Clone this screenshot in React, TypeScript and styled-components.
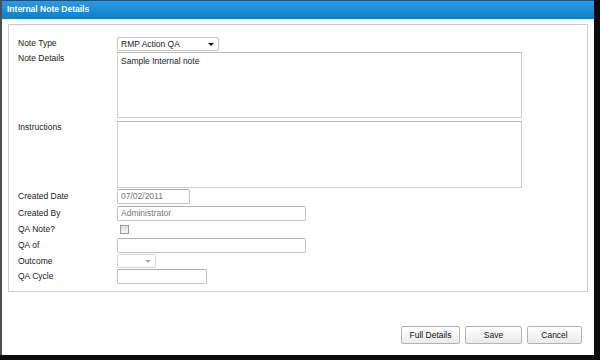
import styled, { createGlobalStyle } from "styled-components";

const Global = createGlobalStyle`
    html, body {
        margin: 0;
        padding: 0;
        background: #0c0c0c;
    }
    body {
        width: 600px;
        height: 360px;
        overflow: hidden;
        font-family: "Liberation Sans", Arial, sans-serif;
    }
`;

const Window = styled.div`
    width: 592px;
    height: 355px;
    background: #fff;
    border-left: 2px solid #4a4f55;
    display: flex;
    flex-direction: column;
    font-family: "Liberation Sans", Arial, sans-serif;
    font-size: 8.5px;
    color: #222;
`;

const TitleBar = styled.div`
    height: 18px;
    flex: none;
    background: linear-gradient(#2f9ae0, #0d7fcf);
    border-top: 1px solid #1c4f7a;
    color: #fff;
    font-weight: bold;
    font-size: 8.5px;
    line-height: 17px;
    padding-left: 5px;
`;

const Fieldset = styled.div`
    margin: 5px 6px 0 6px;
    height: 254px;
    border: 1px solid #cfcfcf;
    border-top-color: #e2c2c2;
    padding: 12px 9px 0 9px;
    display: flex;
    flex-direction: column;
`;

const Row = styled.div<{ $mt?: number; $h: number }>`
    display: grid;
    grid-template-columns: 99px 1fr;
    align-items: start;
    justify-items: start;
    margin-top: ${p => p.$mt ?? 0}px;
    height: ${p => p.$h}px;
`;

const Label = styled.div<{ $top?: number }>`
    line-height: 13px;
    padding-top: ${p => p.$top ?? 0}px;
    color: #222;
`;

const TextInput = styled.div<{ $w: number; $disabled?: boolean }>`
    width: ${p => p.$w}px;
    height: 13px;
    border: 1px solid #c4c4c4;
    border-top-color: #b0b0b0;
    border-radius: 2px;
    background: #fff;
    line-height: 13px;
    padding-left: 3px;
    box-sizing: content-box;
    color: ${p => (p.$disabled ? "#777" : "#222")};
`;

const TextArea = styled.div<{ $h: number }>`
    width: 397px;
    height: ${p => p.$h}px;
    border: 1px solid #d0d0d0;
    border-top-color: #bdbdbd;
    padding: 3px 3px;
    line-height: 11px;
`;

const Select = styled.div<{ $w: number; $light?: boolean }>`
    width: ${p => p.$w}px;
    height: 12px;
    border: 1px solid ${p => (p.$light ? "#c4c4c4" : "#d8d8d8")};
    border-radius: 2px;
    background: #fff;
    display: flex;
    align-items: center;
    justify-content: space-between;
    padding: 0 4px 0 3px;
    line-height: 12px;
`;

const Arrow = styled.span<{ $light?: boolean }>`
    width: 0;
    height: 0;
    border-left: 3px solid transparent;
    border-right: 3px solid transparent;
    border-top: 3px solid ${p => (p.$light ? "#aaa" : "#111")};
`;

const Check = styled.div`
    width: 7px;
    height: 7px;
    margin: 3px 0 0 3px;
    border: 1px solid #9a9a9a;
    background: linear-gradient(#ddd, #f6f6f6);
`;

const Footer = styled.div`
    display: flex;
    justify-content: flex-end;
    gap: 5px;
    margin-top: 34px;
    padding-right: 12px;
`;

const Button = styled.button<{ $w: number }>`
    width: ${p => p.$w}px;
    height: 18px;
    padding: 0;
    border: 1px solid #b4b4b4;
    border-radius: 2px;
    background: linear-gradient(#ffffff, #ebebeb);
    font-family: "Liberation Sans", Arial, sans-serif;
    font-size: 8.5px;
    color: #111;
`;

export default function App() {
    return (
        <>
            <Global />
            <Window>
                <TitleBar>Internal Note Details</TitleBar>
                <Fieldset>
                    <Row $h={14}>
                        <Label>Note Type</Label>
                        <Select $w={93} $light>
                            <span>RMP Action QA</span>
                            <Arrow />
                        </Select>
                    </Row>
                    <Row $mt={1} $h={65}>
                        <Label>Note Details</Label>
                        <TextArea $h={58}>Sample Internal note</TextArea>
                    </Row>
                    <Row $mt={4} $h={66}>
                        <Label>Instructions</Label>
                        <TextArea $h={59} />
                    </Row>
                    <Row $mt={2} $h={15}>
                        <Label $top={1}>Created Date</Label>
                        <TextInput $w={68} $disabled>07/02/2011</TextInput>
                    </Row>
                    <Row $mt={2} $h={15}>
                        <Label $top={1}>Created By</Label>
                        <TextInput $w={184} $disabled>Administrator</TextInput>
                    </Row>
                    <Row $mt={1} $h={15}>
                        <Label $top={1}>QA Note?</Label>
                        <Check />
                    </Row>
                    <Row $mt={1} $h={15}>
                        <Label $top={1}>QA of</Label>
                        <TextInput $w={184} />
                    </Row>
                    <Row $mt={1} $h={15}>
                        <Label $top={1}>Outcome</Label>
                        <Select $w={30}>
                            <span />
                            <Arrow $light />
                        </Select>
                    </Row>
                    <Row $mt={0} $h={15}>
                        <Label $top={1}>QA Cycle</Label>
                        <TextInput $w={85} />
                    </Row>
                </Fieldset>
                <Footer>
                    <Button $w={59}>Full Details</Button>
                    <Button $w={57}>Save</Button>
                    <Button $w={55}>Cancel</Button>
                </Footer>
            </Window>
        </>
    );
}
